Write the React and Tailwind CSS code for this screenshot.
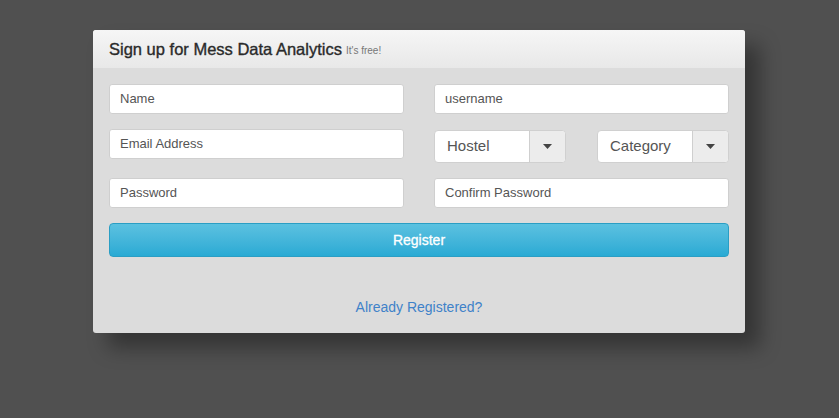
export default function App() {
  const font = { fontFamily: '"Liberation Sans", Arial, sans-serif' };
  const input =
    "h-[30px] w-full rounded-[3px] border border-[#cfcfcf] bg-white px-[10px] text-[13px] text-[#555] flex items-center";
  const Select = ({ label }) => (
    <div className="flex h-[33px] w-[132px] rounded-[4px] border border-[#d0d0d0] bg-white">
      <div className="flex flex-1 items-center pl-[12px] text-[15px] text-[#555]">{label}</div>
      <div className="flex w-[36px] items-center justify-center rounded-r-[4px] border-l border-[#cfcfcf] bg-[#ececec]">
        <svg width="9" height="5" viewBox="0 0 9 5">
          <path d="M0 0h9L4.5 5z" fill="#444" />
        </svg>
      </div>
    </div>
  );
  return (
    <div className="flex h-[418px] w-[839px] bg-[#505050] pl-[93px] pt-[30px]" style={font}>
      <div className="flex h-[303px] w-[652px] flex-col overflow-hidden rounded-[3px] bg-[#dcdcdc] shadow-[15px_15px_20px_rgba(0,0,0,0.35)]">
        <div className="flex h-[38px] items-center gap-[4px] bg-gradient-to-b from-[#f6f6f6] to-[#e8e8e8] px-[16px]">
          <span className="text-[16.5px] text-[#2a2a2a] [-webkit-text-stroke:0.35px_#2a2a2a]">Sign up for Mess Data Analytics</span>
          <span className="mt-[3px] text-[10px] text-[#777]">It's free!</span>
        </div>
        <div className="flex flex-col px-[16px] pt-[16px]">
          <div className="grid grid-cols-[295px_295px] gap-x-[30px]">
            <div className={input}>Name</div>
            <div className={input}>username</div>
            <div className={`${input} mt-[15px]`}>Email Address</div>
            <div className="mt-[16px] flex justify-between">
              <Select label="Hostel" />
              <Select label="Category" />
            </div>
            <div className={`${input} mt-[15px]`}>Password</div>
            <div className={`${input} mt-[15px]`}>Confirm Password</div>
          </div>
          <button className="mt-[15px] h-[34px] w-[620px] rounded-[4px] border border-[#2a9ec4] bg-gradient-to-b from-[#5bc1e0] to-[#28aad4] text-[14px] text-white [-webkit-text-stroke:0.3px_#ffffff]">
            Register
          </button>
          <div className="mt-[40px] text-center text-[14px] text-[#3f82c9]">Already Registered?</div>
        </div>
      </div>
    </div>
  );
}
